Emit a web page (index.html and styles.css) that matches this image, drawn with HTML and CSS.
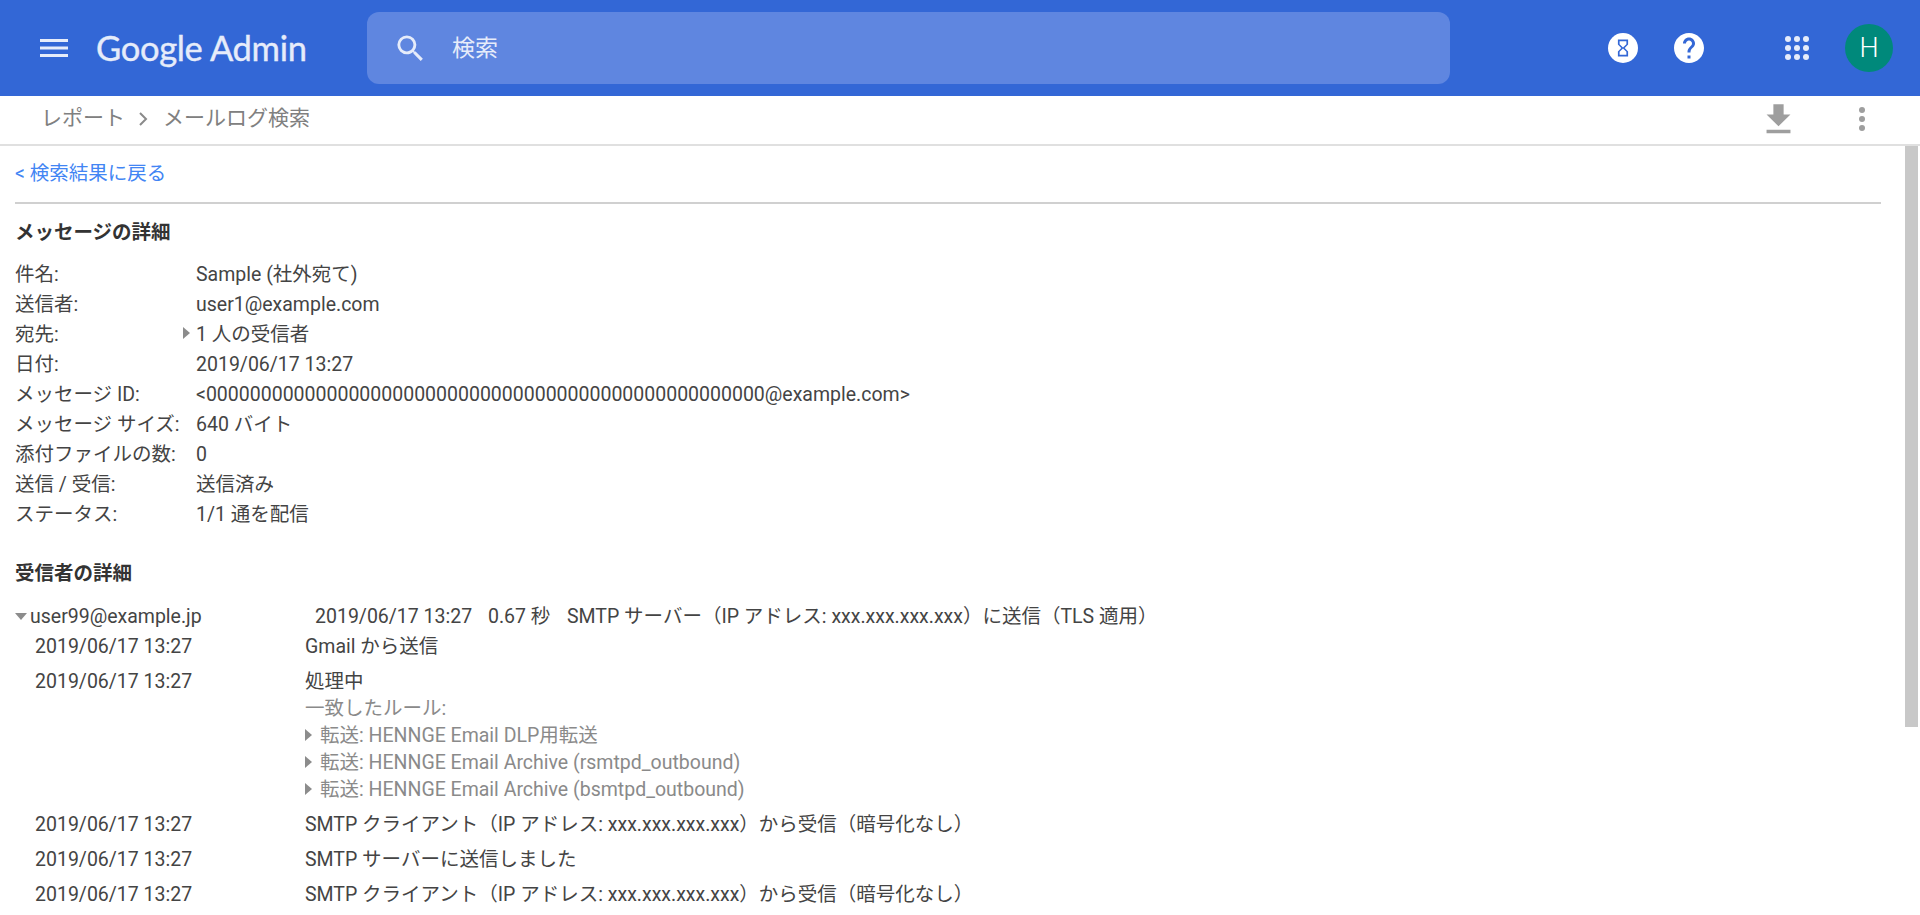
FILE: index.html
```html
<!DOCTYPE html>
<html lang="ja">
<head>
<meta charset="utf-8">
<title>Google Admin</title>
<link rel="stylesheet" href="styles.css">
</head>
<body>
<header class="topbar">
  <svg class="menu-icon" viewBox="0 0 28 18" width="28" height="18"><rect y="0" width="28" height="3"/><rect y="7.5" width="28" height="3"/><rect y="15" width="28" height="3"/></svg>
  <div class="logo">Google Admin</div>
  <div class="search">
    <svg class="search-icon" viewBox="0 0 24 24" width="35" height="35"><path d="M15.5 14h-.79l-.28-.27A6.471 6.471 0 0 0 16 9.5 6.5 6.5 0 1 0 9.5 16c1.61 0 3.09-.59 4.23-1.57l.27.28v.79l5 4.99L20.49 19l-4.99-5zm-6 0C7.01 14 5 11.99 5 9.5S7.01 5 9.5 5 14 7.01 14 9.5 11.99 14 9.5 14z"/></svg>
    <span class="search-text">検索</span>
  </div>
  <div class="top-actions">
    <svg class="hourglass" viewBox="0 0 30 30" width="30" height="30"><circle cx="15" cy="15" r="15" fill="#fff"/><path transform="translate(4.8 4.8) scale(.85)" fill="#3367d6" d="M6 2v6h.01L6 8.01 10 12l-4 4 .01.01H6V22h12v-5.99h-.01L18 16l-4-4 4-3.99-.01-.01H18V2H6zm10 14.5V20H8v-3.5l4-4 4 4zm-4-5l-4-4V4h8v3.5l-4 4z"/></svg>
    <svg class="help" viewBox="2 2 20 20" width="30" height="30"><path fill="#fff" d="M12 2C6.48 2 2 6.48 2 12s4.48 10 10 10 10-4.48 10-10S17.52 2 12 2zm1 17h-2v-2h2v2zm2.07-7.75l-.9.92C13.45 12.9 13 13.5 13 15h-2v-.5c0-1.1.45-2.1 1.17-2.83l1.24-1.26c.37-.36.59-.86.59-1.41 0-1.1-.9-2-2-2s-2 .9-2 2H8c0-2.21 1.79-4 4-4s4 1.79 4 4c0 .88-.36 1.68-.93 2.25z"/></svg>
    <svg class="apps" viewBox="0 0 24 24" width="24" height="24"><g fill="#e6ecfa"><circle cx="3" cy="3" r="3"/><circle cx="12" cy="3" r="3"/><circle cx="21" cy="3" r="3"/><circle cx="3" cy="12" r="3"/><circle cx="12" cy="12" r="3"/><circle cx="21" cy="12" r="3"/><circle cx="3" cy="21" r="3"/><circle cx="12" cy="21" r="3"/><circle cx="21" cy="21" r="3"/></g></svg>
    <div class="avatar">H</div>
  </div>
</header>
<nav class="subbar">
  <div class="crumbs"><span>レポート</span><svg class="chev" viewBox="0 0 9 14" width="9" height="14"><path d="M1 1l6 6-6 6" fill="none" stroke="#8a8a8a" stroke-width="2"/></svg><span>メールログ検索</span></div>
  <div class="sub-actions">
    <svg class="download" viewBox="0 0 24 24" width="41" height="41"><path d="M19 9h-4V3H9v6H5l7 7 7-7zM5 18v2h14v-2H5z"/></svg>
    <svg class="more" viewBox="0 0 6 24" width="6" height="24"><circle cx="3" cy="3" r="3"/><circle cx="3" cy="12" r="3"/><circle cx="3" cy="21" r="3"/></svg>
  </div>
</nav>
<div class="viewport">
  <main class="content">
    <a class="back" href="#">&lt; 検索結果に戻る</a>
    <hr class="rule">
    <h2 class="heading">メッセージの詳細</h2>
    <dl class="meta">
      <div class="meta-row"><dt>件名:</dt><dd>Sample (社外宛て)</dd></div>
      <div class="meta-row"><dt>送信者:</dt><dd>user1@example.com</dd></div>
      <div class="meta-row"><dt>宛先:</dt><dd><i class="tri-right meta-tri"></i>1 人の受信者</dd></div>
      <div class="meta-row"><dt>日付:</dt><dd>2019/06/17 13:27</dd></div>
      <div class="meta-row"><dt>メッセージ ID:</dt><dd>&lt;000000000000000000000000000000000000000000000000000@example.com&gt;</dd></div>
      <div class="meta-row"><dt>メッセージ サイズ:</dt><dd>640 バイト</dd></div>
      <div class="meta-row"><dt>添付ファイルの数:</dt><dd>0</dd></div>
      <div class="meta-row"><dt>送信 / 受信:</dt><dd>送信済み</dd></div>
      <div class="meta-row"><dt>ステータス:</dt><dd>1/1 通を配信</dd></div>
    </dl>
    <h2 class="heading heading-second">受信者の詳細</h2>
    <div class="recipient">
      <i class="tri-down"></i><span class="r-name">user99@example.jp</span><span class="r-date">2019/06/17 13:27</span><span class="r-dur">0.67 秒</span><span>SMTP サーバー（IP アドレス: xxx.xxx.xxx.xxx）に送信（TLS 適用）</span>
    </div>
    <div class="event event-first"><div class="e-time">2019/06/17 13:27</div><div>Gmail から送信</div></div>
    <div class="event"><div class="e-time">2019/06/17 13:27</div><div>
      <div>処理中</div>
      <div class="muted">一致したルール:</div>
      <div class="muted"><i class="tri-right rule-tri"></i>転送: HENNGE Email DLP用転送</div>
      <div class="muted"><i class="tri-right rule-tri"></i>転送: HENNGE Email Archive (rsmtpd_outbound)</div>
      <div class="muted"><i class="tri-right rule-tri"></i>転送: HENNGE Email Archive (bsmtpd_outbound)</div>
    </div></div>
    <div class="event"><div class="e-time">2019/06/17 13:27</div><div>SMTP クライアント（IP アドレス: xxx.xxx.xxx.xxx）から受信（暗号化なし）</div></div>
    <div class="event"><div class="e-time">2019/06/17 13:27</div><div>SMTP サーバーに送信しました</div></div>
    <div class="event"><div class="e-time">2019/06/17 13:27</div><div>SMTP クライアント（IP アドレス: xxx.xxx.xxx.xxx）から受信（暗号化なし）</div></div>
  </main>
  <div class="scrolltrack"><div class="scrollthumb"></div></div>
</div>
</body>
</html>
```
FILE: styles.css
```css
* { box-sizing: border-box; }
html, body { margin: 0; height: 100%; overflow: hidden; }
body {
  display: flex;
  flex-direction: column;
  height: 915px;
  background: #fff;
  color: #444;
  font: 400 19.5px/27px Roboto, "Noto Sans CJK JP", sans-serif;
}
.topbar {
  flex: none;
  height: 96px;
  background: #3367d6;
  display: flex;
  align-items: center;
  padding-left: 40px;
}
.menu-icon { fill: #e6ecfa; flex: none; }
.logo {
  margin-left: 28px;
  width: 271px;
  flex: none;
  font: 400 34.5px/40px Lato, sans-serif;
  color: #e6ecfa;
  letter-spacing: -0.3px;
  -webkit-text-stroke: 0.4px #e6ecfa;
}
.search {
  flex: none;
  width: 1083px;
  height: 72px;
  border-radius: 12px;
  background: #5f86e0;
  display: flex;
  align-items: center;
  padding-left: 26px;
}
.search-icon { fill: #e6ecfa; flex: none; }
.search-text { margin-left: 24px; color: #e6ecfa; font-size: 23px; }
.top-actions { flex: 1; display: flex; align-items: center; padding-left: 158px; }
.help { margin-left: 36px; }
.apps { margin-left: 81px; }
.avatar {
  margin-left: 36px;
  width: 48px;
  height: 48px;
  border-radius: 50%;
  background: #00897b;
  color: #fff;
  font-size: 27px;
  font-weight: 300;
  line-height: 48px;
  text-align: center;
}
.subbar {
  flex: none;
  height: 50px;
  border-bottom: 2px solid #e0e0e0;
  display: flex;
  align-items: center;
  justify-content: space-between;
  padding: 0 55px 0 41px;
}
.crumbs {
  display: flex;
  align-items: center;
  color: #808080;
  font-size: 21px;
  line-height: 42px;
  height: 42px;
  margin-bottom: 4px;
}
.chev { margin: 2px 15px 0 14px; }
.sub-actions { display: flex; align-items: center; margin-bottom: 2px; }
.download { fill: #9e9e9e; }
.more { fill: #9e9e9e; margin-left: 60px; }
.viewport { flex: 1; min-height: 0; display: flex; overflow: hidden; }
.content { flex: 1; min-width: 0; padding: 14px 22px 0 15px; }
.back { display: block; color: #4285f4; text-decoration: none; line-height: 28px; }
.rule { border: 0; height: 2px; background: #d0d0d0; margin: 14px 0 15px; }
.heading { margin: 0; font-size: 19.5px; font-weight: 700; line-height: 28px; color: #333; }
.heading-second { margin-top: 30px; }
.meta { margin: 13px 0 0; }
.meta-row { display: flex; height: 30px; line-height: 30px; }
.meta-row dt { width: 181px; flex: none; white-space: nowrap; }
.meta-row dd { margin: 0; position: relative; }
.tri-right {
  display: inline-block;
  width: 0;
  height: 0;
  border-style: solid;
  border-width: 6px 0 6px 7px;
  border-color: transparent transparent transparent #8c8c8c;
}
.meta-tri { position: absolute; left: -13px; top: 7px; }
.rule-tri { margin-right: 8px; vertical-align: 1px; }
.tri-down {
  flex: none;
  width: 0;
  height: 0;
  border-style: solid;
  border-width: 7px 6px 0 6px;
  border-color: #8c8c8c transparent transparent transparent;
  margin-right: 3px;
}
.recipient {
  display: flex;
  align-items: center;
  margin-top: 15px;
  height: 27px;
  white-space: nowrap;
}
.r-name { width: 285px; flex: none; }
.r-date { width: 173px; flex: none; }
.r-dur { width: 79px; flex: none; }
.event { display: flex; padding: 4px 0 4px 20px; }
.event-first { margin-top: -1px; }
.e-time { width: 270px; flex: none; }
.muted { color: #8a8a8a; }
.scrolltrack { flex: none; width: 17px; padding: 0 2px; }
.scrollthumb { height: 581px; background: #c8c8c8; }
```
